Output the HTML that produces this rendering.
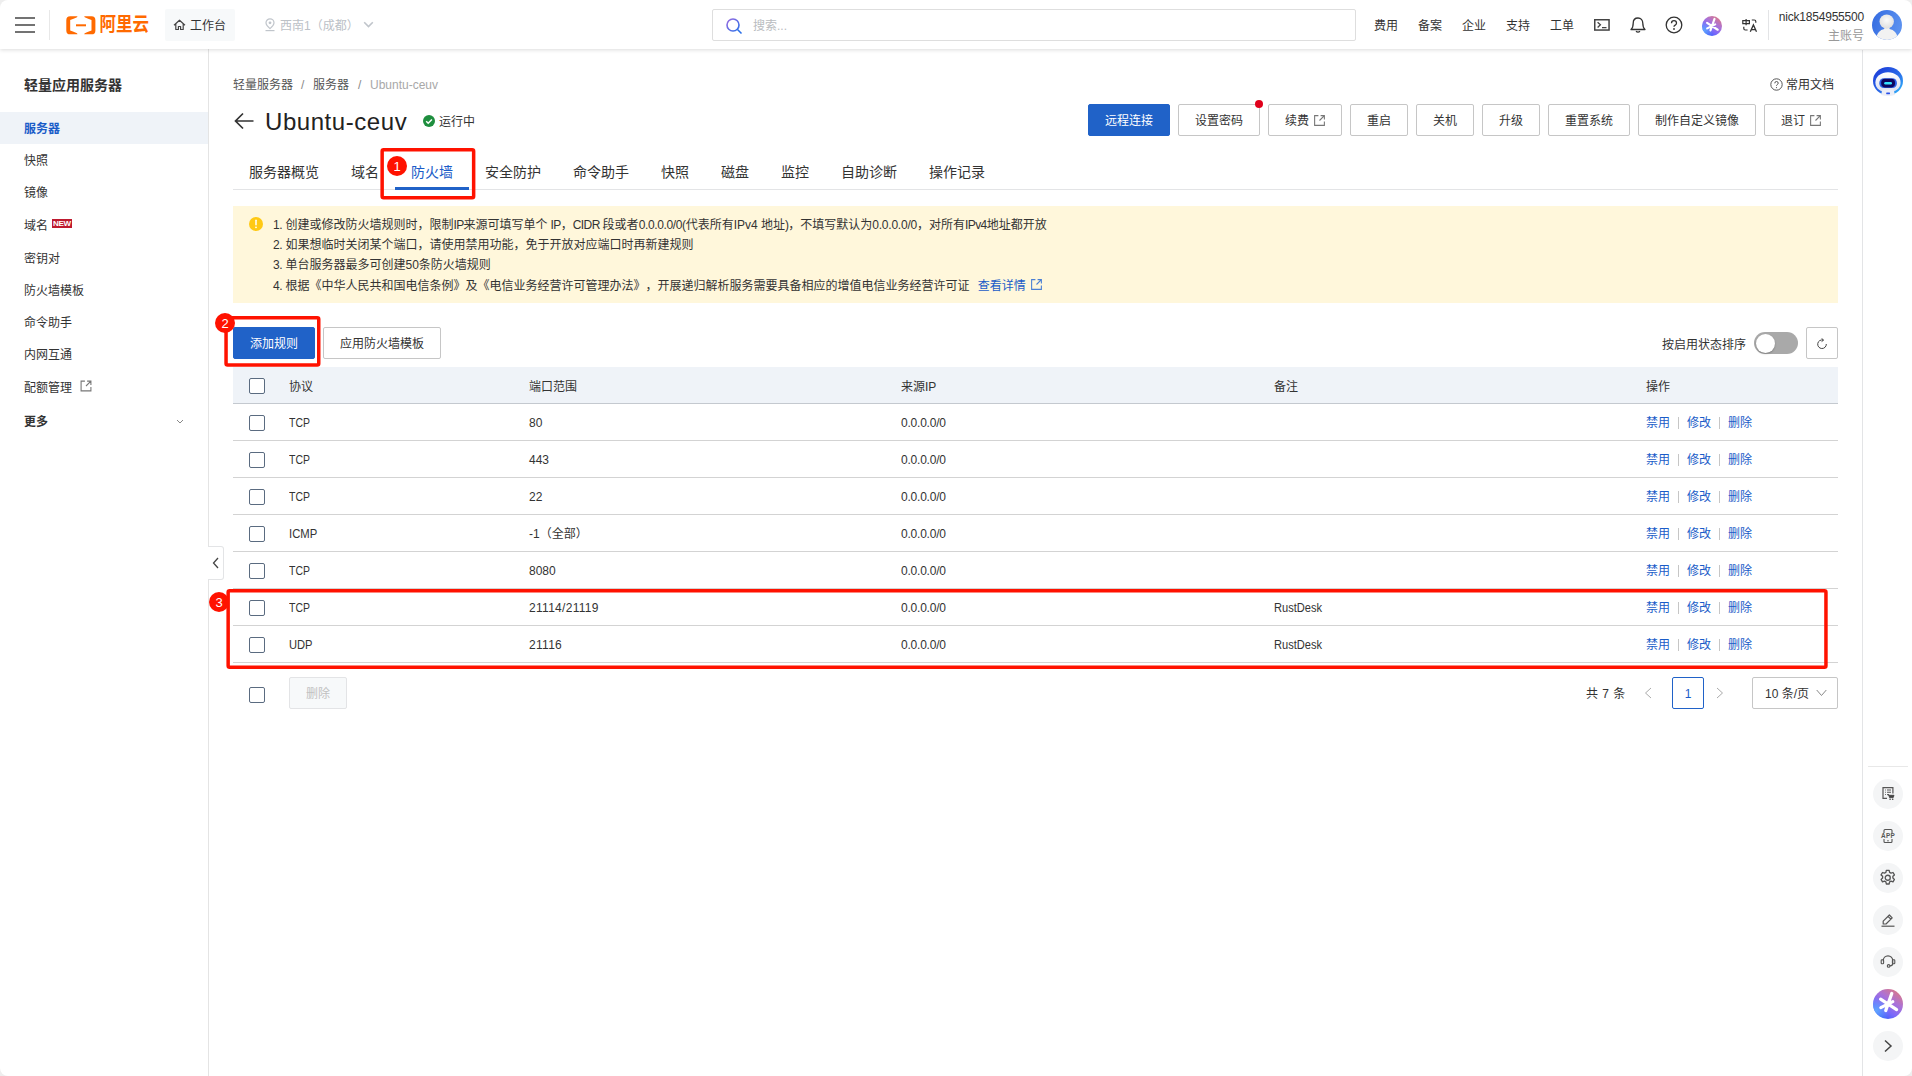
<!DOCTYPE html>
<html lang="zh-CN">
<head>
<meta charset="utf-8">
<title>轻量应用服务器</title>
<style>
*{box-sizing:border-box;margin:0;padding:0}
html,body{width:1912px;height:1076px;overflow:hidden;background:#fff}
body{text-spacing-trim:space-all;font-family:"Liberation Sans","Noto Sans CJK SC",sans-serif;font-size:12px;color:#333;position:relative}
.abs{position:absolute}
svg{display:block}
/* header */
#hdr{position:absolute;left:0;top:0;width:1912px;height:49px;background:#fff;box-shadow:0 1px 4px rgba(0,0,0,.14);z-index:10}
#hdr .t{position:absolute;top:1px;height:50px;line-height:50px;font-size:12px;color:#333;white-space:nowrap}
/* sidebar */
#side{position:absolute;left:0;top:49px;width:209px;height:1027px;border-right:1px solid #e4e4e4;background:#fff}
#side .it{position:absolute;left:0;width:208px;height:32px;line-height:34px;padding-left:24px;font-size:12px;color:#333;white-space:nowrap}
/* main */
.bc{position:absolute;top:76px;height:18px;line-height:18px;font-size:12px;color:#555;white-space:nowrap}
.btn{position:absolute;top:104px;height:32px;line-height:32px;border:1px solid #c6c6c6;border-radius:2px;background:#fff;font-size:12px;color:#333;text-align:center;white-space:nowrap}
.tab{position:absolute;top:160px;height:24px;line-height:24px;font-size:14px;color:#333;white-space:nowrap}
.row{position:absolute;left:233px;width:1605px;height:37px;border-bottom:1px solid #d3d3d3}
.th span{top:1px!important}
.row span,.th span{position:absolute;top:0;line-height:38px;font-size:12px;color:#333;white-space:nowrap}
.cb{position:absolute;left:16px;top:11px;width:16px;height:16px;border:1px solid #5a6b80;border-radius:2px;background:#fff}
.row .a{color:#1a5cc8}
.row .sp{position:absolute;top:13px;width:1px;height:12px;background:#c6c6c6}
.rb{position:absolute;width:32px;height:32px;border-radius:16px;background:#f4f5f6;left:1872px}
.nt{position:absolute;left:273px;height:18px;line-height:18px;font-size:12px;color:#333;white-space:nowrap}
.red{position:absolute;border:3px solid #ff1414;border-radius:2px}
.num{position:absolute;border-radius:50%;background:#f11;color:#fff;font-size:12px;text-align:center}
.rb{width:30px!important;height:30px!important;border-radius:15px!important;left:1873px!important}
</style>
</head>
<body>
<div class="abs" style="left:0;top:0;width:1912px;height:1076px;border-radius:8px;box-shadow:0 0 0 12px #eeeeee;z-index:30;pointer-events:none"></div>
<!-- HEADER -->
<div id="hdr">
  <svg class="abs" style="left:15px;top:17px" width="20" height="16" viewBox="0 0 20 16"><path d="M0 0h20v2H0zM0 7h20v2H0zM0 14h20v2H0z" fill="#737373"/></svg>
  <div class="abs" style="left:49px;top:10px;width:1px;height:30px;background:#e8e8e8"></div>
  <svg class="abs" style="left:66px;top:15.500px" width="30" height="19" viewBox="0 0 30 19"><path d="M11.500 .3H4.200Q.3 .3 .3 4.200v10.200q0 3.900 3.900 3.900h7.300l-.5-1Q7.500 15.600 4.200 14.600V4q3.300-1 6.800-2.700z" fill="#ff6a00"/><path d="M18.200 .3h7.300q3.900 0 3.900 3.900v10.200q0 3.900-3.900 3.900h-7.300l.5-1q3.500-1.700 6.800-2.700V4q-3.300-1-6.800-2.700z" fill="#ff6a00"/><rect x="10" y="8.300" width="10" height="2" fill="#ff6a00"/></svg>
  <div class="abs" style="left:99.500px;top:9.900px;height:28px;line-height:28px;font-size:16.500px;font-weight:700;color:#ff6a00;white-space:nowrap;transform:scaleY(1.200);transform-origin:0 50%">阿里云</div>
  <div class="abs" style="left:165px;top:9px;width:70px;height:32px;background:#f7f9fa;border-radius:2px"></div>
  <svg class="abs" style="left:173px;top:19px" width="13" height="12" viewBox="0 0 13 12"><path d="M1 6.200L6.500 1.200 12 6.200M2.800 5v5.500h2.600V7.500h2.200v3h2.600V5" stroke="#444" stroke-width="1.200" fill="none" stroke-linejoin="round"/></svg>
  <div class="t" style="left:190px">工作台</div>
  <svg class="abs" style="left:264px;top:18px" width="12" height="14" viewBox="0 0 12 14"><path d="M6 10.600C3.200 8.200 2 6.400 2 4.800a4 4 0 0 1 8 0c0 1.600-1.200 3.400-4 5.800z" stroke="#c0c5cb" stroke-width="1.200" fill="none"/><circle cx="6" cy="4.800" r="1.400" fill="#c0c5cb"/><path d="M1.500 12.600h9" stroke="#c0c5cb" stroke-width="1.200"/></svg>
  <div class="t" style="left:280px;color:#bcc1c7">西南1（成都）</div>
  <svg class="abs" style="left:363px;top:21px" width="11" height="8" viewBox="0 0 11 8"><path d="M1.200 1.200l4.300 4.300 4.300-4.300" stroke="#c0c5cb" stroke-width="1.600" fill="none"/></svg>
  <div class="abs" style="left:712px;top:9px;width:644px;height:32px;border:1px solid #dedede;border-radius:2px"></div>
  <svg class="abs" style="left:725px;top:17px" width="18" height="18" viewBox="0 0 18 18"><defs><linearGradient id="sg" x1="0" y1="0" x2="1" y2="1"><stop offset="0" stop-color="#9a6be0"/><stop offset="1" stop-color="#2a6fe8"/></linearGradient></defs><circle cx="8" cy="8" r="6" stroke="url(#sg)" stroke-width="1.600" fill="none"/><path d="M12.500 12.500l4 4" stroke="#2a6fe8" stroke-width="1.600"/></svg>
  <div class="t" style="left:753px;color:#b9bcc0">搜索...</div>
  <div class="t" style="left:1374px">费用</div>
  <div class="t" style="left:1418px">备案</div>
  <div class="t" style="left:1462px">企业</div>
  <div class="t" style="left:1506px">支持</div>
  <div class="t" style="left:1550px">工单</div>
  <svg class="abs" style="left:1594px;top:19px" width="16" height="12" viewBox="0 0 16 12"><rect x=".75" y=".75" width="14.300" height="10.300" stroke="#444" stroke-width="1.500" fill="none"/><path d="M3.600 3.200l2.800 2.600-2.800 2.600M8 8.600h4.500" stroke="#444" stroke-width="1.300" fill="none"/></svg>
  <svg class="abs" style="left:1629px;top:16px" width="18" height="18" viewBox="0 0 18 18"><path d="M2 13.500h14c-2-1.500-2.200-3-2.200-6.200C13.800 4 11.800 2 9 2S4.200 4 4.200 7.300c0 3.200-.2 4.700-2.200 6.200zM7 15.200q2 1.800 4 0" stroke="#333" stroke-width="1.300" fill="none" stroke-linejoin="round"/></svg>
  <svg class="abs" style="left:1665px;top:16px" width="18" height="18" viewBox="0 0 18 18"><circle cx="9" cy="9" r="7.800" stroke="#333" stroke-width="1.300" fill="none"/><path d="M6.500 7.200q0-2.500 2.500-2.500t2.500 2.300q0 1.400-1.300 2.100T9 10.800" stroke="#333" stroke-width="1.300" fill="none"/><circle cx="9" cy="13" r=".9" fill="#333"/></svg>
  <svg class="abs" style="left:1702px;top:16px" width="20" height="20" viewBox="0 0 30 30"><circle cx="15" cy="15" r="15" fill="url(#ag2)"/><circle cx="15" cy="15" r="15" fill="url(#ag3)"/><path d="M18.800 4.400L12.700 21.600M7.600 10.200l16 10.400M7.800 18.600l12-6" stroke="#fff" stroke-width="3.200" stroke-linecap="round"/></svg>
  <svg class="abs" style="left:1741px;top:17px" width="17" height="16" viewBox="0 0 17 16"><path d="M1.800 3.600h6.600v3H1.800zM5.100 2v6.200" stroke="#333" stroke-width="1.200" fill="none"/><path d="M10.800 3h2.500q1.500 0 1.500 1.500v1.200M2.800 9.800v1.700q0 1.500 1.500 1.500h2.300" stroke="#333" stroke-width="1.200" fill="none"/><path d="M9.300 14.800l3.100-6.900 3.100 6.900M10.300 12.600h4.200" stroke="#333" stroke-width="1.300" fill="none"/></svg>
  <div class="abs" style="left:1768px;top:10px;width:1px;height:30px;background:#e3e4e6"></div>
  <div class="abs" style="right:48px;top:8px;height:18px;line-height:18px;font-size:12px;color:#333;white-space:nowrap;letter-spacing:-.2px">nick1854955500</div>
  <div class="abs" style="right:48px;top:27px;height:18px;line-height:18px;font-size:12px;color:#999;white-space:nowrap">主账号</div>
  <svg class="abs" style="left:1872px;top:10px" width="30" height="30" viewBox="0 0 30 30"><defs><linearGradient id="av" x1="0" y1="0" x2="1" y2=".3"><stop offset="0" stop-color="#336ae0"/><stop offset="1" stop-color="#5a90ef"/></linearGradient><radialGradient id="avh" cx=".5" cy=".4" r=".6"><stop offset="0" stop-color="#fbfbfb"/><stop offset="1" stop-color="#dedede"/></radialGradient><clipPath id="avc"><circle cx="15" cy="15" r="15"/></clipPath></defs><circle cx="15" cy="15" r="15" fill="url(#av)"/><g clip-path="url(#avc)"><path d="M12.300 17.500v1.500Q5.500 20.500 4.300 27.500L8 31h14l3.700-3.500Q24.500 20.500 17.500 19v-1.500z" fill="#f2f2f2"/><ellipse cx="14.700" cy="11.600" rx="7.200" ry="7.100" fill="url(#avh)"/></g></svg>
</div>

<!-- SIDEBAR -->
<div id="side">
  <div class="abs" style="left:24px;top:25px;height:22px;line-height:22px;font-size:14px;font-weight:700;color:#333;white-space:nowrap">轻量应用服务器</div>
  <div class="it" style="top:63px;background:#eff3f8;color:#1a5cc8;font-weight:700">服务器</div>
  <div class="it" style="top:95px">快照</div>
  <div class="it" style="top:127px">镜像</div>
  <div class="it" style="top:160px">域名</div>
  <div class="abs" style="left:52px;top:170px;width:20px;height:9px;background:#be1a2f;color:#fff;font-size:8px;line-height:9.500px;text-align:center;font-weight:700;letter-spacing:-.3px">NEW</div>
  <div class="it" style="top:193px">密钥对</div>
  <div class="it" style="top:225px">防火墙模板</div>
  <div class="it" style="top:257px">命令助手</div>
  <div class="it" style="top:289px">内网互通</div>
  <div class="it" style="top:322px">配额管理</div>
  <svg class="abs" style="left:80px;top:331px" width="12" height="12" viewBox="0 0 11 11"><path d="M4.500 1H1v9h9V6.500M6.500 1H10v3.500M10 1L5.500 5.500" stroke="#777" stroke-width="1" fill="none"/></svg>
  <div class="it" style="top:356px;font-weight:700">更多</div>
  <svg class="abs" style="left:176px;top:370px" width="8" height="5" viewBox="0 0 8 5"><path d="M1 1l3 3 3-3" stroke="#888" stroke-width="1" fill="none"/></svg>
</div>
<!-- collapse handle -->
<div class="abs" style="left:208px;top:546px;width:16px;height:34px;border:1px solid #e3e4e6;border-left:none;border-radius:0 3px 3px 0;background:#fff"></div>
<svg class="abs" style="left:212px;top:557px" width="7" height="12" viewBox="0 0 7 12"><path d="M6 1L1.500 6 6 11" stroke="#444" stroke-width="1.300" fill="none"/></svg>

<!-- MAIN -->
<div id="main">
  <div class="bc" style="left:233px">轻量服务器</div>
  <div class="bc" style="left:301px;color:#888">/</div>
  <div class="bc" style="left:313px">服务器</div>
  <div class="bc" style="left:358px;color:#888">/</div>
  <div class="bc" style="left:370px;color:#a8a8a8">Ubuntu-ceuv</div>
  <svg class="abs" style="left:1769.700px;top:78.400px" width="13" height="13" viewBox="0 0 13 13"><circle cx="6.500" cy="6.500" r="5.700" stroke="#555" stroke-width="1" fill="none"/><path d="M4.800 5.300q0-1.800 1.700-1.800t1.700 1.600q0 1-.9 1.500t-.8 1.200" stroke="#555" stroke-width="1" fill="none"/><circle cx="6.500" cy="9.600" r=".6" fill="#555"/></svg>
  <div class="bc" style="left:1786px;color:#333">常用文档</div>

  <svg class="abs" style="left:234px;top:112px" width="20" height="18" viewBox="0 0 20 18"><path d="M19.500 9H1.500M9 1.500L1.500 9 9 16.500" stroke="#333" stroke-width="1.700" fill="none"/></svg>
  <div class="abs" style="left:265px;top:105px;height:34px;line-height:34px;font-size:24px;color:#222;white-space:nowrap;letter-spacing:.56px">Ubuntu-ceuv</div>
  <svg class="abs" style="left:423px;top:115px" width="12" height="12" viewBox="0 0 12 12"><circle cx="6" cy="6" r="6" fill="#1e8e3e"/><path d="M3.200 6.200l2 2L8.900 4.400" stroke="#fff" stroke-width="1.500" fill="none"/></svg>
  <div class="abs" style="left:439px;top:113px;height:18px;line-height:18px;font-size:12px;color:#333">运行中</div>

  <div class="btn" style="left:1088px;width:82px;background:#2062c8;border-color:#2062c8;color:#fff">远程连接</div>
  <div class="btn" style="left:1178px;width:82px">设置密码</div>
  <div class="abs" style="left:1255px;top:100px;width:8px;height:8px;border-radius:4px;background:#e0001b"></div>
  <div class="btn" style="left:1268px;width:74px;padding-right:16px">续费</div>
  <svg class="abs" style="left:1312.500px;top:113.500px" width="13" height="13" viewBox="0 0 12 12"><path d="M5 1.500H1.500v9h9V7M7 1.500h3.500V5M10.500 1.500L6 6" stroke="#777" stroke-width="1" fill="none"/></svg>
  <div class="btn" style="left:1350px;width:58px">重启</div>
  <div class="btn" style="left:1416px;width:58px">关机</div>
  <div class="btn" style="left:1482px;width:58px">升级</div>
  <div class="btn" style="left:1548px;width:82px">重置系统</div>
  <div class="btn" style="left:1638px;width:118px">制作自定义镜像</div>
  <div class="btn" style="left:1764px;width:74px;padding-right:16px">退订</div>
  <svg class="abs" style="left:1808.500px;top:113.500px" width="13" height="13" viewBox="0 0 12 12"><path d="M5 1.500H1.500v9h9V7M7 1.500h3.500V5M10.500 1.500L6 6" stroke="#777" stroke-width="1" fill="none"/></svg>

  <!-- tabs -->
  <div class="abs" style="left:233px;top:189px;width:1605px;height:1px;background:#e3e4e6"></div>
  <div class="tab" style="left:249px">服务器概览</div>
  <div class="tab" style="left:351px">域名</div>
  <div class="tab" style="left:411px;color:#1a5cc8">防火墙</div>
  <div class="tab" style="left:485px">安全防护</div>
  <div class="tab" style="left:573px">命令助手</div>
  <div class="tab" style="left:661px">快照</div>
  <div class="tab" style="left:721px">磁盘</div>
  <div class="tab" style="left:781px">监控</div>
  <div class="tab" style="left:841px">自助诊断</div>
  <div class="tab" style="left:929px">操作记录</div>
  <div class="abs" style="left:395px;top:187px;width:74px;height:3px;background:#2062c8"></div>

  <!-- notice -->
  <div class="abs" style="left:233px;top:206px;width:1605px;height:97px;background:#fff7db"></div>
  <svg class="abs" style="left:249px;top:217px" width="14" height="14" viewBox="0 0 14 14"><circle cx="7" cy="7" r="7" fill="#ffc914"/><path d="M7 3.200v4.600" stroke="#fff" stroke-width="1.500" stroke-linecap="round"/><circle cx="7" cy="10.300" r=".9" fill="#fff"/></svg>
  <div class="nt" style="top:216px"><span style="letter-spacing:-0.3px">1. </span>创建或修改防火墙规则时，限制<span style="letter-spacing:-0.6px">IP</span>来源可填写单个<span style="letter-spacing:-0.56px"> IP</span>，<span style="letter-spacing:-0.54px">CIDR </span>段或者<span style="letter-spacing:-0.37px">0.0.0.0/0(</span>代表所有IPv4 地址<span style="letter-spacing:-0.8px">)</span>，不填写默认为<span style="letter-spacing:-0.21px">0.0.0.0/0</span>，对所有<span style="letter-spacing:-0.6px">IPv4</span>地址都开放</div>
  <div class="nt" style="top:236px"><span style="letter-spacing:-0.3px">2. </span>如果想临时关闭某个端口，请使用禁用功能，免于开放对应端口时再新建规则</div>
  <div class="nt" style="top:256px"><span style="letter-spacing:-0.3px">3. </span>单台服务器最多可创建50条防火墙规则</div>
  <div class="nt" style="top:277px"><span style="letter-spacing:-0.3px">4. </span>根据《中华人民共和国电信条例》及《电信业务经营许可管理办法》，开展递归解析服务需要具备相应的增值电信业务经营许可证 <span style="color:#1a5cc8;margin-left:5px">查看详情</span></div>
  <svg class="abs" style="left:1029.500px;top:278px" width="13" height="13" viewBox="0 0 12 12"><path d="M5 1.500H1.500v9h9V7M7 1.500h3.500V5M10.500 1.500L6 6" stroke="#4a7fd4" stroke-width="1" fill="none"/></svg>

  <!-- toolbar -->
  <div class="btn" style="left:233px;top:327px;width:82px;background:#2062c8;border-color:#2062c8;color:#fff">添加规则</div>
  <div class="btn" style="left:323px;top:327px;width:118px">应用防火墙模板</div>
  <div class="abs" style="left:1662px;top:336px;height:18px;line-height:18px;font-size:12px;color:#333;white-space:nowrap">按启用状态排序</div>
  <div class="abs" style="left:1754px;top:332px;width:44px;height:22px;border-radius:11px;background:#a9a9a9"></div>
  <div class="abs" style="left:1755.500px;top:333.500px;width:19px;height:19px;border-radius:10px;background:#fff;box-shadow:0 1px 2px rgba(0,0,0,.25)"></div>
  <div class="btn" style="left:1806px;top:327px;width:32px"></div>
  <svg class="abs" style="left:1816px;top:338px" width="12" height="12" viewBox="0 0 12 12"><path d="M7.200 2.100A4.300 4.300 0 1 0 10.300 6" stroke="#444" stroke-width="1" fill="none"/><path d="M5.600 .4l2 1.700-2 1.500" stroke="#444" stroke-width="1" fill="none"/></svg>

  <!-- table -->
  <div class="th abs" style="left:233px;top:367px;width:1605px;height:37px;background:#eff3f8;border-bottom:1px solid #c4c9cf">
    <i class="cb"></i><span style="left:56px">协议</span><span style="left:296px">端口范围</span><span style="left:668px">来源IP</span><span style="left:1041px">备注</span><span style="left:1413px">操作</span>
  </div>
  <div class="row" style="top:404px"><i class="cb"></i><span style="left:56px;transform:scaleX(.87);transform-origin:0 0">TCP</span><span style="left:296px">80</span><span style="left:668px;letter-spacing:-.22px">0.0.0.0/0</span><span style="left:1041px"></span><span class="a" style="left:1413px">禁用</span><b class="sp" style="left:1445px"></b><span class="a" style="left:1454px">修改</span><b class="sp" style="left:1486px"></b><span class="a" style="left:1495px">删除</span></div>
  <div class="row" style="top:441px"><i class="cb"></i><span style="left:56px;transform:scaleX(.87);transform-origin:0 0">TCP</span><span style="left:296px">443</span><span style="left:668px;letter-spacing:-.22px">0.0.0.0/0</span><span style="left:1041px"></span><span class="a" style="left:1413px">禁用</span><b class="sp" style="left:1445px"></b><span class="a" style="left:1454px">修改</span><b class="sp" style="left:1486px"></b><span class="a" style="left:1495px">删除</span></div>
  <div class="row" style="top:478px"><i class="cb"></i><span style="left:56px;transform:scaleX(.87);transform-origin:0 0">TCP</span><span style="left:296px">22</span><span style="left:668px;letter-spacing:-.22px">0.0.0.0/0</span><span style="left:1041px"></span><span class="a" style="left:1413px">禁用</span><b class="sp" style="left:1445px"></b><span class="a" style="left:1454px">修改</span><b class="sp" style="left:1486px"></b><span class="a" style="left:1495px">删除</span></div>
  <div class="row" style="top:515px"><i class="cb"></i><span style="left:56px;transform:scaleX(.94);transform-origin:0 0">ICMP</span><span style="left:296px">-1（全部）</span><span style="left:668px;letter-spacing:-.22px">0.0.0.0/0</span><span style="left:1041px"></span><span class="a" style="left:1413px">禁用</span><b class="sp" style="left:1445px"></b><span class="a" style="left:1454px">修改</span><b class="sp" style="left:1486px"></b><span class="a" style="left:1495px">删除</span></div>
  <div class="row" style="top:552px"><i class="cb"></i><span style="left:56px;transform:scaleX(.87);transform-origin:0 0">TCP</span><span style="left:296px">8080</span><span style="left:668px;letter-spacing:-.22px">0.0.0.0/0</span><span style="left:1041px"></span><span class="a" style="left:1413px">禁用</span><b class="sp" style="left:1445px"></b><span class="a" style="left:1454px">修改</span><b class="sp" style="left:1486px"></b><span class="a" style="left:1495px">删除</span></div>
  <div class="row" style="top:589px"><i class="cb"></i><span style="left:56px;transform:scaleX(.87);transform-origin:0 0">TCP</span><span style="left:296px;letter-spacing:.3px">21114/21119</span><span style="left:668px;letter-spacing:-.22px">0.0.0.0/0</span><span style="left:1041px;transform:scaleX(.925);transform-origin:0 0">RustDesk</span><span class="a" style="left:1413px">禁用</span><b class="sp" style="left:1445px"></b><span class="a" style="left:1454px">修改</span><b class="sp" style="left:1486px"></b><span class="a" style="left:1495px">删除</span></div>
  <div class="row" style="top:626px"><i class="cb"></i><span style="left:56px;transform:scaleX(.93);transform-origin:0 0">UDP</span><span style="left:296px;letter-spacing:.3px">21116</span><span style="left:668px;letter-spacing:-.22px">0.0.0.0/0</span><span style="left:1041px;transform:scaleX(.925);transform-origin:0 0">RustDesk</span><span class="a" style="left:1413px">禁用</span><b class="sp" style="left:1445px"></b><span class="a" style="left:1454px">修改</span><b class="sp" style="left:1486px"></b><span class="a" style="left:1495px">删除</span></div>

  <!-- footer -->
  <i class="cb" style="left:249px;top:687px"></i>
  <div class="btn" style="left:289px;top:677px;width:58px;background:#f7f9fa;border-color:#e3e4e6;color:#c1c1c1">删除</div>
  <div class="abs" style="left:1586px;top:685px;height:18px;line-height:18px;font-size:12px;color:#333;white-space:nowrap;word-spacing:1px">共 7 条</div>
  <svg class="abs" style="left:1644px;top:687px" width="8" height="12" viewBox="0 0 8 12"><path d="M7 1L1.500 6 7 11" stroke="#aaa" stroke-width="1" fill="none"/></svg>
  <div class="btn" style="left:1672px;top:677px;width:32px;border-color:#2062c8;color:#1a5cc8">1</div>
  <svg class="abs" style="left:1716px;top:687px" width="8" height="12" viewBox="0 0 8 12"><path d="M1 1l5.500 5L1 11" stroke="#aaa" stroke-width="1" fill="none"/></svg>
  <div class="btn" style="left:1752px;top:677px;width:86px;text-align:left;padding-left:12px">10 条/页</div>
  <svg class="abs" style="left:1816px;top:689px" width="11" height="8" viewBox="0 0 11 8"><path d="M.7 1l4.800 5.500L10.300 1" stroke="#888" stroke-width="1" fill="none"/></svg>

  <!-- red annotations -->
  <svg class="abs" style="left:0;top:0;z-index:20" width="1912" height="1076" viewBox="0 0 1912 1076">
    <g fill="none" stroke="#ff1200" stroke-width="3.500">
      <rect x="382.150" y="149.850" width="91.500" height="47.900" rx="1.500"/>
      <rect x="226.050" y="317.850" width="92.700" height="47.100" rx="1.500"/>
      <rect x="228.150" y="590.850" width="1597.800" height="76.300" rx="1.500"/>
    </g>
    <g fill="#ff1200"><circle cx="397" cy="166" r="10"/><circle cx="225" cy="323" r="10"/><circle cx="219" cy="602" r="10"/></g>
    <g fill="#fff" font-family="Liberation Sans, sans-serif" font-size="13" text-anchor="middle"><text x="397" y="170.600">1</text><text x="225" y="327.600">2</text><text x="219" y="606.600">3</text></g>
  </svg>
  <!-- right rail -->
  <div class="abs" style="left:1862px;top:50px;width:1px;height:1026px;background:#e3e4e6"></div>
  <div class="abs" style="left:1868px;top:766px;width:40px;height:1px;background:#e8e8e8"></div>
  <div class="rb" style="top:779px"></div>
  <svg class="abs" style="left:1881px;top:787px" width="14" height="14" viewBox="0 0 14 14"><path d="M11.900 6.500V.7H2v10.600h4" stroke="#555" stroke-width="1.200" fill="none"/><path d="M4 3h.8M6 3h4M4 5.200h.8M6 5.200h4M4 7.500h.8" stroke="#555" stroke-width="1.100"/><path d="M6.300 7.600h1.500l.7 3h3.700l.8-2.300H8.100z" fill="#444" stroke="#444" stroke-width=".9" stroke-linejoin="round"/><circle cx="9.100" cy="12.300" r=".8" fill="#444"/><circle cx="11.700" cy="12.300" r=".8" fill="#444"/></svg>
  <div class="rb" style="top:821px"></div>
  <svg class="abs" style="left:1880px;top:828px" width="16" height="16" viewBox="0 0 16 16"><path d="M4 5V2.500q0-1 1-1h6q1 0 1 1V5M12 11v2.500q0 1-1 1H5q-1 0-1-1V11" stroke="#555" stroke-width="1.100" fill="none"/><path d="M7.200 12.800h1.600" stroke="#555" stroke-width="1"/><text x="8" y="10.300" text-anchor="middle" font-family="Liberation Sans,sans-serif" font-size="6.400" font-weight="700" fill="#555" letter-spacing=".3">APP</text></svg>
  <div class="rb" style="top:863px"></div>
  <svg class="abs" style="left:1879.300px;top:869.300px" width="17.500" height="17.500" viewBox="0 0 16 16"><path d="M6.700 1.200h2.600l.4 1.900 1.300.7 1.800-.6 1.300 2.200-1.400 1.300v1.500l1.400 1.300-1.300 2.200-1.800-.6-1.300.7-.4 1.900H6.700l-.4-1.900-1.300-.7-1.800.6-1.300-2.200 1.400-1.300V6.700L1.900 5.400l1.300-2.200 1.800.6 1.300-.7z" stroke="#555" stroke-width="1.200" fill="none" stroke-linejoin="round"/><circle cx="8" cy="8" r="2.300" stroke="#555" stroke-width="1.200" fill="none"/></svg>
  <div class="rb" style="top:905px"></div>
  <svg class="abs" style="left:1880px;top:912px" width="16" height="16" viewBox="0 0 16 16"><path d="M3.200 9.200L9.400 3l2.800 2.800L6 12H3.200zM8 4.400l2.800 2.800" stroke="#555" stroke-width="1.200" fill="none" stroke-linejoin="round"/><path d="M1.500 14.200h13" stroke="#555" stroke-width="1.200"/></svg>
  <div class="rb" style="top:947px"></div>
  <svg class="abs" style="left:1880px;top:953px" width="16" height="16" viewBox="0 0 16 16"><path d="M3.300 8.200V7.500a4.700 4.700 0 0 1 9.400 0v3q0 2.200-2.700 2.400" stroke="#555" stroke-width="1.200" fill="none"/><rect x="1.200" y="6.800" width="2.400" height="4" rx=".8" stroke="#555" stroke-width="1.100" fill="none"/><rect x="12.400" y="6.800" width="2.400" height="4" rx=".8" stroke="#555" stroke-width="1.100" fill="none"/><circle cx="8.600" cy="12.900" r="1.300" stroke="#555" stroke-width="1.100" fill="#f4f5f6"/></svg>
  <svg class="abs" style="left:1873px;top:989px" width="30" height="30" viewBox="0 0 30 30"><defs><linearGradient id="ag2" x1=".9" y1=".12" x2=".3" y2="1"><stop offset="0" stop-color="#d8788a"/><stop offset=".35" stop-color="#ac72d6"/><stop offset=".7" stop-color="#7a68fa"/><stop offset="1" stop-color="#3560fa"/></linearGradient><radialGradient id="ag3" cx=".1" cy=".72" r=".45"><stop offset="0" stop-color="#62a6ff"/><stop offset="1" stop-color="#62a6ff" stop-opacity="0"/></radialGradient></defs><circle cx="15" cy="15" r="15" fill="url(#ag2)"/><circle cx="15" cy="15" r="15" fill="url(#ag3)"/><path d="M18.800 4.400L12.700 21.600M7.600 10.200l16 10.400M7.800 18.600l12-6" stroke="#fff" stroke-width="3.200" stroke-linecap="round"/></svg>
  <div class="rb" style="top:1031px"></div>
  <svg class="abs" style="left:1883px;top:1039px" width="10" height="14" viewBox="0 0 10 14"><path d="M2 1.500L8 7l-6 5.500" stroke="#444" stroke-width="1.500" fill="none"/></svg>
  <!-- robot -->
  <svg class="abs" style="left:1873px;top:66.700px" width="30" height="29" viewBox="0 0 30 29"><defs><linearGradient id="rg" x1="0" y1="0" x2="1" y2="1"><stop offset="0" stop-color="#1a34d6"/><stop offset=".55" stop-color="#2a6ae8"/><stop offset="1" stop-color="#2fc0ff"/></linearGradient><linearGradient id="rw" x1="0" y1="0" x2="0" y2="1"><stop offset="0" stop-color="#ffffff"/><stop offset="1" stop-color="#d8dcee"/></linearGradient></defs><ellipse cx="15" cy="14" rx="15" ry="14" fill="url(#rg)"/><ellipse cx="15" cy="15.500" rx="12.600" ry="10.300" fill="url(#rw)"/><path d="M9.500 22.500h11l1.500 5.500q-7 2-14 0z" fill="#eceef7"/><rect x="6.300" y="11.300" width="17.600" height="9.800" rx="4.500" fill="#2a60e8"/><rect x="8.200" y="11.800" width="13.800" height="8.600" rx="3.800" fill="#0e0760"/><rect x="11.200" y="15" width="7.800" height="2.400" rx="1.200" fill="#35e2ff"/><rect x="13.200" y="25.600" width="3.800" height="1.600" rx=".4" fill="#2a50e8"/></svg>
</div>
</body>
</html>
